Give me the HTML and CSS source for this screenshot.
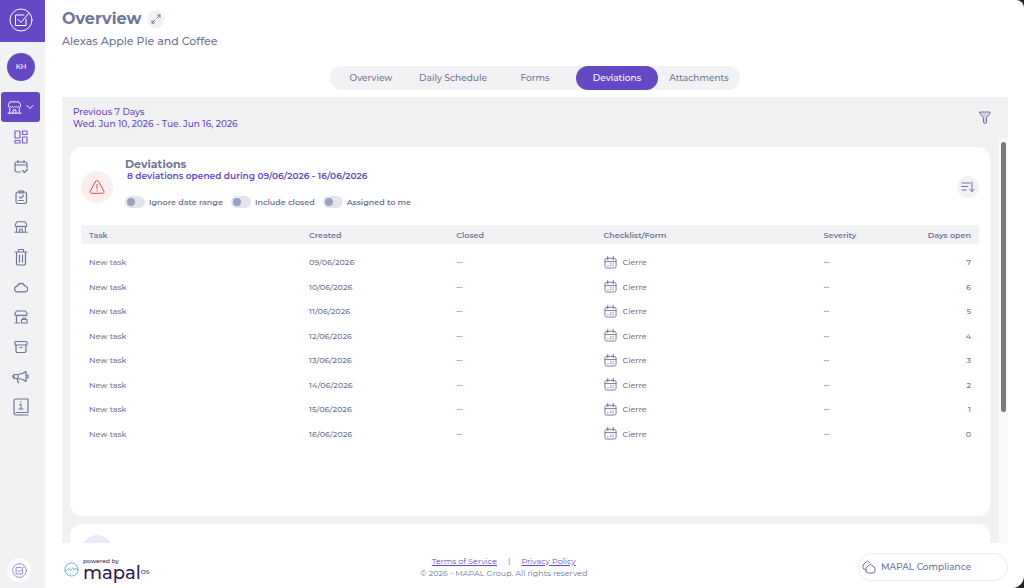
FILE: index.html
```html
<!DOCTYPE html>
<html lang="en">
<head>
    <meta charset="UTF-8">
    <meta name="viewport" content="width=device-width, initial-scale=1.0">
    <title>Overview - MAPAL Compliance</title>
    <link rel="stylesheet" href="styles.css">
</head>
<body>

    <!-- shared icons -->
    <svg class="sprite" aria-hidden="true">
        <symbol id="icon-check" viewBox="0 0 24 24">
            <circle cx="12" cy="12" r="11"/>
            <path d="M17 11v6.500H6.500V7H15M9 11.500l3 3L19.500 5.500"/>
        </symbol>
        <symbol id="icon-store" viewBox="0 0 16 16">
            <path d="M3.500 2h9l2 3v2q-1 1.500-2.200 0-1 1.500-2.200 0-1 1.500-2.100 0-1 1.500-2.100 0-1 1.500-2.200 0-1 1.500-2.200 0V5zM3 8.500V14M13 8.500V14M1 14h14M6.500 14v-3.500h3V14"/>
        </symbol>
        <symbol id="icon-calendar" viewBox="0 0 14 14">
            <rect x="1" y="2.500" width="12" height="10.500" rx="2"/>
            <path d="M1 6h12M4 .500v3.500M10 .500v3.500M7 8.500h.500M9.500 8.500h.500M4 10.500h.500M7 10.500h.500M9.500 10.500h.500"/>
        </symbol>
    </svg>

    <nav class="sidebar">
        <a href="#" class="sidebar-logo" aria-label="Home"><svg width="24" height="24"><use href="#icon-check"/></svg></a>
        <button class="avatar">KH</button>
        <button class="location" aria-label="Location">
            <svg width="15" height="15"><use href="#icon-store"/></svg>
            <svg width="8" height="8" viewBox="0 0 8 8"><path d="M1 2.500l3 3 3-3"/></svg>
        </button>
        <ul class="menu">
            <li><a href="#" class="active" aria-label="Dashboard"><svg width="14" height="14" viewBox="0 0 14 14"><path d="M1 1h5v7H1zM8.500 1H13v3.500H8.500zM1 10.500h5V13H1zM8.500 7H13v6H8.500z"/></svg></a></li>
            <li><a href="#" aria-label="Schedule"><svg width="14" height="14" viewBox="0 0 14 14"><path d="M6.500 12H3a2 2 0 0 1-2-2V4a2 2 0 0 1 2-2h8a2 2 0 0 1 2 2v4M1 5h12M4 .500v2M10 .500v2M8.500 10.500l2 2 3-3"/></svg></a></li>
            <li><a href="#" aria-label="Tasks"><svg width="14" height="14" viewBox="0 0 14 14"><rect x="2" y="2" width="10.500" height="11.500" rx="2"/><path d="M5 1h4.500v2H5zM5.500 7l1.500 1.200L9.500 5.500M4.500 10.500h5"/></svg></a></li>
            <li><a href="#" aria-label="Stores"><svg width="14" height="14"><use href="#icon-store"/></svg></a></li>
            <li><a href="#" aria-label="Waste"><svg width="14" height="18" viewBox="0 0 14 18"><path d="M1 4h12M4.500 4V1.500h5V4M2.500 4v11a2 2 0 0 0 2 2h5a2 2 0 0 0 2-2V4M5.500 7v7M8.500 7v7"/></svg></a></li>
            <li><a href="#" aria-label="Cloud"><svg width="14" height="12" viewBox="0 0 14 12"><path d="M3.500 10.800a2.700 2.700 0 0 1-.300-5.400A4 4 0 0 1 10.800 5a2.900 2.900 0 0 1 0 5.800z"/></svg></a></li>
            <li><a href="#" aria-label="Locked stores"><svg width="14" height="14" viewBox="0 0 14 14"><path d="M2.500 1h9L13 3.500V5q-1 1.500-2 0-1 1.500-2 0-1 1.500-2 0-1 1.500-2 0-1 1.500-2 0-1 1.500-2 0V3.500zM2.500 6.500V13M1 13h4.500M7.500 9.500H13V13H7.500zM9 9.500V8h2.500v1.500"/></svg></a></li>
            <li><a href="#" aria-label="Archive"><svg width="14" height="14" viewBox="0 0 14 14"><rect x="1" y="1.500" width="12" height="3.500" rx="1"/><path d="M2 5v6a1.500 1.500 0 0 0 1.500 1.500h7A1.500 1.500 0 0 0 12 11V5M6 7.500h2"/></svg></a></li>
            <li><a href="#" aria-label="News"><svg width="18" height="16" viewBox="0 0 18 16"><path d="M2 5.500h4q4 0 8-3v10q-4-3-8-3H2zM1 6.500v2M5 9.500l1.500 4.500M6 5.500v4M14 6h2v3h-2"/></svg></a></li>
            <li><a href="#" aria-label="Information"><svg width="16" height="18" viewBox="0 0 16 18"><path d="M15 17H3a2 2 0 0 1-2-2V2.500A1.500 1.500 0 0 1 2.500 1H15v13.500H3M6.500 6.500H8V11M6 11h4M7.500 4h.500"/></svg></a></li>
        </ul>
        <a href="#" class="sidebar-bottom" aria-label="Compliance"><svg width="15" height="15"><use href="#icon-check"/></svg></a>
    </nav>

    <main class="main">
        <header class="header">
            <div class="title-row">
                <h1>Overview</h1>
                <button class="round-btn small" aria-label="Expand"><svg width="10" height="10" viewBox="0 0 10 10"><path d="M6 4l3-3M6.500 1H9v2.500M4 6L1 9M1 6.500V9h2.500"/></svg></button>
            </div>
            <p class="subtitle">Alexas Apple Pie and Coffee</p>
        </header>

        <div class="tabs">
            <button>Overview</button>
            <button>Daily Schedule</button>
            <button>Forms</button>
            <button class="selected">Deviations</button>
            <button>Attachments</button>
        </div>

        <section class="panel">
            <div class="panel-head">
                <p>Previous 7 Days<br>Wed. Jun 10, 2026 - Tue. Jun 16, 2026</p>
                <button class="filter" aria-label="Filter"><svg width="12" height="13" viewBox="0 0 12 13"><path d="M1 1h10v1.500L7.500 6.500v5L6 12.500l-1.500-1v-5L1 2.500z"/></svg></button>
            </div>
            <div class="panel-body">
                <div class="cards">
                    <article class="card">
                        <div class="card-head">
                            <span class="card-icon alert"><svg width="16" height="16" viewBox="0 0 16 16"><path d="M6.700 2.200L1.200 12a1.500 1.500 0 0 0 1.300 2.300h11a1.500 1.500 0 0 0 1.300-2.300L9.300 2.200a1.500 1.500 0 0 0-2.600 0zM8 5.500v4M8 11.500v.500"/></svg></span>
                            <div class="card-title">
                                <h2>Deviations</h2>
                                <p>8 deviations opened during 09/06/2026 - 16/06/2026</p>
                                <div class="toggles">
                                    <label><input type="checkbox">Ignore date range</label>
                                    <label><input type="checkbox">Include closed</label>
                                    <label><input type="checkbox">Assigned to me</label>
                                </div>
                            </div>
                            <button class="round-btn" aria-label="Sort"><svg width="14" height="12" viewBox="0 0 14 12"><path d="M1 2h8M1 5.500h6M1 9h4M11 1v9.500M8.500 8l2.500 2.500L13.500 8"/></svg></button>
                        </div>
                        <table>
                            <thead>
                                <tr>
                                    <th class="wide">Task</th>
                                    <th>Created</th>
                                    <th>Closed</th>
                                    <th class="wide">Checklist/Form</th>
                                    <th class="narrow">Severity</th>
                                    <th class="narrow days">Days open</th>
                                </tr>
                            </thead>
                            <tbody>
                                <tr><td>New task</td><td>09/06/2026</td><td>--</td><td><span class="form"><svg width="13" height="13"><use href="#icon-calendar"/></svg>Cierre</span></td><td>--</td><td class="days">7</td></tr>
                                <tr><td>New task</td><td>10/06/2026</td><td>--</td><td><span class="form"><svg width="13" height="13"><use href="#icon-calendar"/></svg>Cierre</span></td><td>--</td><td class="days">6</td></tr>
                                <tr><td>New task</td><td>11/06/2026</td><td>--</td><td><span class="form"><svg width="13" height="13"><use href="#icon-calendar"/></svg>Cierre</span></td><td>--</td><td class="days">5</td></tr>
                                <tr><td>New task</td><td>12/06/2026</td><td>--</td><td><span class="form"><svg width="13" height="13"><use href="#icon-calendar"/></svg>Cierre</span></td><td>--</td><td class="days">4</td></tr>
                                <tr><td>New task</td><td>13/06/2026</td><td>--</td><td><span class="form"><svg width="13" height="13"><use href="#icon-calendar"/></svg>Cierre</span></td><td>--</td><td class="days">3</td></tr>
                                <tr><td>New task</td><td>14/06/2026</td><td>--</td><td><span class="form"><svg width="13" height="13"><use href="#icon-calendar"/></svg>Cierre</span></td><td>--</td><td class="days">2</td></tr>
                                <tr><td>New task</td><td>15/06/2026</td><td>--</td><td><span class="form"><svg width="13" height="13"><use href="#icon-calendar"/></svg>Cierre</span></td><td>--</td><td class="days">1</td></tr>
                                <tr><td>New task</td><td>16/06/2026</td><td>--</td><td><span class="form"><svg width="13" height="13"><use href="#icon-calendar"/></svg>Cierre</span></td><td>--</td><td class="days">0</td></tr>
                            </tbody>
                        </table>
                    </article>
                    <article class="card">
                        <span class="card-icon"></span>
                    </article>
                </div>
                <div class="scrollbar"><div class="thumb"></div></div>
            </div>
        </section>

        <footer class="footer">
            <div class="brand">
                <svg width="15" height="15" viewBox="0 0 16 16"><circle cx="8" cy="8" r="7"/><path d="M1 9.500q2.500 0 3.200-2 .800-1.500 1.500 0 .800 2 1.800 1 .700-.500 1-1.500.700-1 1.300 0 .700 2 1.700 1l1-1.500q.800 2.500 3.300 1.500"/></svg>
                <div class="brand-text">
                    <small>powered by</small>
                    <div class="brand-name"><span>mapal</span><small>OS</small></div>
                </div>
            </div>
            <div class="legal">
                <div class="links"><a href="#">Terms of Service</a><span>|</span><a href="#">Privacy Policy</a></div>
                <p>© 2026 - MAPAL Group. All rights reserved</p>
            </div>
            <button class="product">
                <svg width="14" height="14" viewBox="0 0 14 14"><path d="M3 9.500A2 2 0 0 1 1 7.500V5l3.500-3.500Q5.500.500 6.500 1.500L8 2.800M4 11V8l3.500-3.200q1-1 2 0L13 8v3a2 2 0 0 1-2 2H6a2 2 0 0 1-2-2z"/></svg>
                MAPAL Compliance
            </button>
        </footer>
    </main>

</body>
</html>
```

FILE: styles.css
```css
* {
    box-sizing: border-box;
}
html {
    background: #222;
}
body {
    margin: 0;
    height: 100vh;
    display: flex;
    overflow: hidden;
    background: #fff;
    border-radius: 0 8px 12px 0;
    font-family: Montserrat, Inter, sans-serif;
    font-size: 9px;
    line-height: 12px;
    font-weight: 500;
    color: #6f7598;
}
h1, h2, p, ul {
    margin: 0;
    padding: 0;
}
button {
    border: none;
    padding: 0;
    background: none;
    font: inherit;
    color: inherit;
    cursor: pointer;
}
a {
    color: #6548c4;
}
svg {
    display: block;
    flex-shrink: 0;
    fill: none;
    stroke: currentColor;
    stroke-width: 1;
    stroke-linecap: round;
    stroke-linejoin: round;
}
.sprite {
    position: absolute;
    width: 0;
    height: 0;
}

/* sidebar */
.sidebar {
    width: 45px;
    flex-shrink: 0;
    display: flex;
    flex-direction: column;
    background: #f2f2f5;
}
.sidebar-logo {
    height: 42px;
    padding: 8px 9px;
    background: #6548c4;
    color: #fff;
}
.avatar {
    width: 28px;
    height: 28px;
    margin: 11px 0 11px 7px;
    border-radius: 50%;
    background: #6548c4;
    color: #fff;
    font-size: 7px;
}
.location {
    width: 39px;
    height: 30px;
    margin-left: 1px;
    display: flex;
    align-items: center;
    justify-content: center;
    gap: 4px;
    border-radius: 3px;
    background: #6548c4;
    color: #fff;
}
.menu {
    list-style: none;
    width: 42px;
}
.menu a {
    height: 30px;
    display: flex;
    align-items: center;
    justify-content: center;
    color: #6f7598;
}
.menu a.active {
    color: #7a60d0;
}
.menu svg {
    stroke-width: 1.2;
}
.sidebar-bottom {
    width: 24px;
    height: 24px;
    margin: auto 0 6px 7px;
    display: flex;
    align-items: center;
    justify-content: center;
    border-radius: 50%;
    background: #fff;
}

/* main column */
.main {
    flex: 1;
    min-width: 0;
    display: flex;
    flex-direction: column;
    padding: 8px 16px 0 17px;
}
.title-row {
    display: flex;
    align-items: center;
    gap: 6px;
}
h1 {
    font-size: 16px;
    line-height: 22px;
    font-weight: 700;
}
.subtitle {
    font-size: 11px;
    line-height: 22px;
}
.round-btn {
    width: 22px;
    height: 22px;
    display: flex;
    align-items: center;
    justify-content: center;
    border-radius: 50%;
    background: #f2f2f5;
}
.round-btn.small {
    width: 18px;
    height: 18px;
}
.tabs {
    align-self: center;
    display: flex;
    margin: 14px 0 7px;
    border-radius: 12px;
    background: #f2f2f5;
}
.tabs button {
    width: 82px;
    height: 24px;
    border-radius: 12px;
}
.tabs .selected {
    background: #6548c4;
    color: #fff;
}

/* grey panel */
.panel {
    flex: 1;
    min-height: 0;
    display: flex;
    flex-direction: column;
    background: #f1f1f4;
}
.panel-head {
    display: flex;
    justify-content: space-between;
    align-items: center;
    height: 41px;
    padding: 0 17px 0 11px;
    color: #6548c4;
}
.filter {
    color: #6f7598;
}
.filter path {
    fill: #d4d6e2;
}
.panel-body {
    flex: 1;
    min-height: 0;
    display: flex;
}
.cards {
    flex: 1;
    padding: 9px 9px 0 8px;
    overflow: hidden;
}
.card {
    min-height: 369px;
    margin-bottom: 8px;
    padding: 11px;
    border-radius: 12px;
    background: #fff;
}
.card-head {
    display: flex;
    align-items: center;
    height: 58px;
    margin-bottom: 9px;
}
.card-icon {
    width: 32px;
    height: 32px;
    display: flex;
    align-items: center;
    justify-content: center;
    border-radius: 50%;
    background: #ece8f8;
}
.card-icon.alert {
    background: #faeeee;
    color: #d94a4a;
}
.card-title {
    flex: 1;
    align-self: flex-start;
    padding-left: 12px;
    font-weight: 600;
}
.card-title h2 {
    font-size: 11px;
    line-height: 12px;
    font-weight: 700;
}
.card-title p {
    padding-left: 2px;
    color: #6548c4;
}
.toggles {
    display: flex;
    gap: 8px;
    margin-top: 14px;
    font-size: 8px;
}
.toggles label {
    display: flex;
    align-items: center;
    gap: 4px;
}
.toggles input {
    appearance: none;
    width: 20px;
    height: 12px;
    margin: 0;
    padding: 2px;
    border-radius: 6px;
    background: #e4e4ec;
}
.toggles input::before {
    content: "";
    display: block;
    width: 8px;
    height: 8px;
    border-radius: 50%;
    background: #9ba0c0;
}
.toggles input:checked::before {
    margin-left: auto;
    background: #6548c4;
}

/* deviations table */
table {
    width: 100%;
    height: 221px;
    table-layout: fixed;
    border-collapse: separate;
    border-spacing: 0;
    font-size: 8px;
}
th, td {
    padding: 0 8px;
    text-align: left;
}
th {
    width: 16.4%;
    height: 25px;
    border-bottom: 6px solid #fff;
    background: #f2f2f5;
    font-weight: 600;
}
th.wide {
    width: 24.5%;
}
th.narrow {
    width: 9.1%;
}
.days {
    text-align: right;
}
.form {
    display: flex;
    align-items: center;
    gap: 6px;
}

/* scrollbar */
.scrollbar {
    width: 9px;
    padding: 4px 2px;
    background: #fafafa;
}
.thumb {
    height: 68%;
    border-radius: 3px;
    background: #7b7b7b;
}

/* footer */
.footer {
    height: 45px;
    padding-top: 2px;
    display: flex;
    justify-content: space-between;
    align-items: center;
}
.brand {
    display: flex;
    align-items: center;
    gap: 4px;
    padding: 6px 0 0 2px;
    color: #5bb8c6;
}
.brand-text {
    color: #2e2350;
}
.brand-text small {
    display: block;
    font-size: 6px;
    line-height: 7px;
}
.brand-name {
    display: flex;
    font-size: 18px;
    line-height: 16px;
}
.brand-name small {
    padding-top: 4px;
}
.legal {
    text-align: center;
    font-size: 8px;
    font-weight: 400;
}
.links {
    display: flex;
    justify-content: center;
    gap: 11px;
    color: #6548c4;
}
.product {
    width: 150px;
    height: 28px;
    display: flex;
    align-items: center;
    gap: 5px;
    padding-left: 3px;
    border: 1px solid #ebebef;
    border-radius: 14px;
}
```
